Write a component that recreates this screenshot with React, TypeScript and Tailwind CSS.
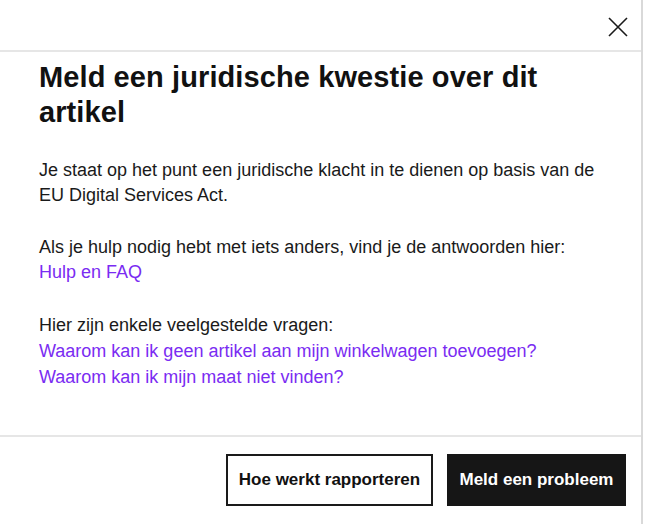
export default function App() {
    return (
        <div className="h-[524px] w-[645px] bg-white font-['Liberation_Sans',Arial,sans-serif] text-[#1a1a1a]">
            <div className="flex h-full w-[643px] flex-col border-r-2 border-[#d9d9d9]">
                {/* Header */}
                <div className="flex h-[52px] shrink-0 items-center justify-end border-b-2 border-[#e6e6e6] pr-[11px] pt-[4px]">
                    <button className="flex h-[24px] w-[24px] items-center justify-center">
                        <svg width="22" height="22" viewBox="0 0 22 22" fill="none" stroke="#1a1a1a" strokeWidth="1.6">
                            <path d="M2 2L20 20M20 2L2 20" />
                        </svg>
                    </button>
                </div>

                {/* Body */}
                <div className="flex-1 pl-[39px] pr-[29px] pt-[8px]">
                    <h1 className="max-w-[540px] text-[29px] font-bold leading-[35px] tracking-[0.1px] text-[#111]">
                        Meld een juridische kwestie over dit artikel
                    </h1>
                    <p className="mt-[28px] text-[18px] leading-[25px]">
                        Je staat op het punt een juridische klacht in te dienen op basis van de EU Digital Services Act.
                    </p>
                    <p className="mt-[27px] text-[18px] leading-[25px]">
                        Als je hulp nodig hebt met iets anders, vind je de antwoorden hier:
                        <br />
                        <a className="text-[#7a2cf2]">Hulp en FAQ</a>
                    </p>
                    <div className="mt-[27px] text-[18px] leading-[26px]">
                        <p>Hier zijn enkele veelgestelde vragen:</p>
                        <a className="block text-[#7a2cf2]">Waarom kan ik geen artikel aan mijn winkelwagen toevoegen?</a>
                        <a className="block text-[#7a2cf2]">Waarom kan ik mijn maat niet vinden?</a>
                    </div>
                </div>

                {/* Footer */}
                <div className="flex h-[89px] shrink-0 items-start justify-end gap-[14px] border-t-2 border-[#e6e6e6] pr-[15px] pt-[17px]">
                    <button className="h-[52px] w-[207px] border-2 border-[#1a1a1a] bg-white text-[17px] font-bold text-[#111]">
                        Hoe werkt rapporteren
                    </button>
                    <button className="h-[52px] w-[179px] bg-[#161616] text-[17px] font-bold text-white">
                        Meld een probleem
                    </button>
                </div>
            </div>
        </div>
    );
}
